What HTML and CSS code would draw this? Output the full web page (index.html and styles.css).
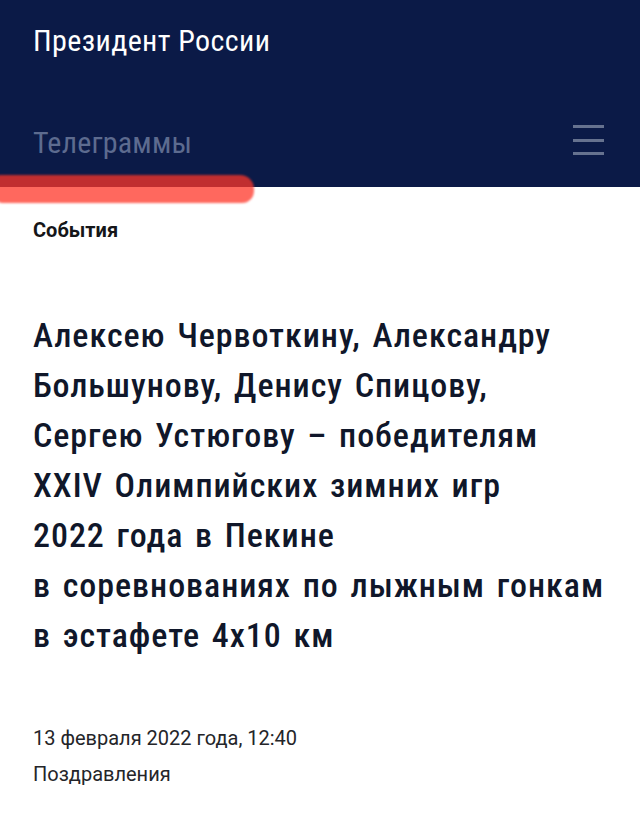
FILE: index.html
```html
<!DOCTYPE html>
<html lang="ru">
<head>
<meta charset="utf-8">
<title>Президент России — Телеграммы</title>
<link rel="stylesheet" href="styles.css">
</head>
<body>
<header class="site-header">
  <div class="brand">Президент России</div>
  <div class="section-row">
    <div class="section-title">Телеграммы</div>
    <button class="menu-btn" aria-label="Меню">
      <span class="menu-line"></span>
      <span class="menu-line"></span>
      <span class="menu-line"></span>
    </button>
  </div>
</header>
<div class="marker"></div>
<main class="content">
  <div class="rubric">События</div>
  <h1 class="headline">Алексею Червоткину, Александру<br>Большунову, Денису Спицову,<br>Сергею Устюгову – победителям<br>XXIV Олимпийских зимних игр<br>2022 года в Пекине<br>в соревнованиях по лыжным гонкам<br>в эстафете 4х10 км</h1>
  <div class="date">13 февраля 2022 года, 12:40</div>
  <div class="tag">Поздравления</div>
</main>
</body>
</html>
```
FILE: styles.css
```css
html, body {
  margin: 0;
  padding: 0;
  background: #ffffff;
}
body {
  position: relative;
  font-family: "Roboto Condensed", "Liberation Sans Narrow", "Roboto", sans-serif;
  width: 640px;
  height: 825px;
  overflow: hidden;
}
.site-header {
  background: #0b1a47;
  height: 187px;
  box-sizing: border-box;
  padding: 23px 36px 0 33px;
  display: flex;
  flex-direction: column;
}
.brand {
  color: #ffffff;
  font-size: 30px;
  line-height: 36px;
  letter-spacing: 0.4px;
}
.section-row {
  margin-top: 66px;
  display: flex;
  justify-content: space-between;
  align-items: center;
}
.section-title {
  color: #5d6b8f;
  font-size: 30px;
  line-height: 36px;
  letter-spacing: 0.2px;
}
.menu-btn {
  background: none;
  border: 0;
  padding: 0;
  margin-top: -6px;
  width: 31px;
  display: flex;
  flex-direction: column;
  gap: 10.5px;
}
.menu-line {
  display: block;
  height: 3px;
  background: #66728f;
}
.marker {
  position: absolute;
  left: -4px;
  top: 175px;
  width: 258px;
  height: 28px;
  border-radius: 4px 14px 12px 6px;
  background: rgba(255, 54, 40, 0.75);
  filter: blur(1px);
}
.content {
  padding: 0 10px 0 33px;
}
.rubric {
  margin-top: 31px;
  font-family: "Roboto", "Liberation Sans", sans-serif;
  font-weight: 700;
  font-size: 20px;
  line-height: 24px;
  color: #151619;
}
.headline {
  margin: 68px 0 0 0;
  font-weight: 500;
  font-size: 34px;
  line-height: 50px;
  letter-spacing: 0.95px;
  word-spacing: 3px;
  color: #10172a;
  white-space: nowrap;
}
.date {
  margin-top: 66px;
  font-family: "Roboto", "Liberation Sans", sans-serif;
  font-size: 20px;
  line-height: 24px;
  color: #242529;
}
.tag {
  margin-top: 12px;
  font-family: "Roboto", "Liberation Sans", sans-serif;
  font-size: 20px;
  line-height: 24px;
  color: #242529;
}
```
